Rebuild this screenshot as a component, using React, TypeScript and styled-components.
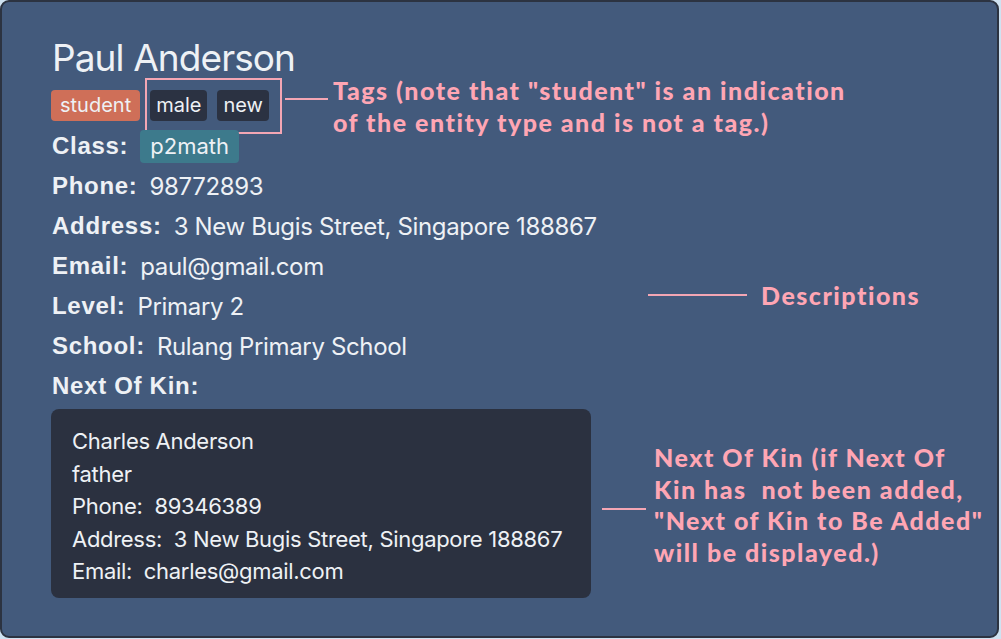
import React from "react";
import styled, { createGlobalStyle } from "styled-components";

const Global = createGlobalStyle`
  html, body { margin: 0; padding: 0; background: #cfe2f1; }
  body { width: 1001px; height: 639px; overflow: hidden; }
`;

const Card = styled.div`
  position: relative;
  box-sizing: border-box;
  width: 999px;
  height: 638px;
  background: #435a7c;
  border: 2px solid #2c3341;
  border-radius: 9px;
  padding: 34px 0 0 49px;
  font-family: Inter, "Liberation Sans", sans-serif;
  color: #eef1f5;
`;

const Name = styled.div`
  font-size: 37px;
  font-weight: 400;
  line-height: 44px;
  letter-spacing: -0.9px;
  padding-left: 1px;
`;

const TagRow = styled.div`
  display: flex;
  align-items: flex-end;
  gap: 7px;
  height: 46px;
  box-sizing: border-box;
  padding-bottom: 5px;
`;

const TagGroup = styled.div`
  display: flex;
  gap: 10px;
  padding: 10px 11px 11px 3px;
  margin: -10px 0 -11px 0;
  outline: 2px solid #f4a6b4;
`;

const Tag = styled.span<{ $bg: string; $pad: number }>`
  display: inline-block;
  background: ${(p) => p.$bg};
  color: #eef1f5;
  font-size: 20px;
  line-height: 31px;
  padding: 0 ${(p) => p.$pad}px;
  border-radius: 4px;
`;

const Row = styled.div`
  display: flex;
  align-items: center;
  height: 40px;
  font-size: 24px;
  padding-left: 1px;
`;

const Label = styled.span`
  font-family: "Liberation Sans", Arial, sans-serif;
  font-weight: 700;
  font-size: 24px;
  letter-spacing: 0.7px;
  margin-right: 12px;
`;

const Value = styled.span`
  font-weight: 400;
  letter-spacing: -0.35px;
`;

const ClassTag = styled.span`
  background: #3d7a8c;
  font-size: 22px;
  line-height: 33px;
  padding: 0 10px;
  border-radius: 4px;
`;

const KinBox = styled.div`
  margin-top: 3px;
  width: 540px;
  height: 189px;
  box-sizing: border-box;
  background: #2b3140;
  border-radius: 8px;
  padding: 16px 0 0 21px;
`;

const KinLine = styled.div`
  font-size: 22px;
  line-height: 32.5px;
  letter-spacing: -0.3px;
`;

const Note = styled.div<{ $x: number; $y: number }>`
  position: absolute;
  left: ${(p) => p.$x}px;
  top: ${(p) => p.$y}px;
  font-family: Lato, "Noto Sans", sans-serif;
  font-weight: 900;
  font-size: 25px;
  line-height: 31.5px;
  letter-spacing: 1.5px;
  color: #ffa6b4;
  white-space: nowrap;
`;

const Leader = styled.div<{ $x: number; $y: number; $w: number }>`
  position: absolute;
  left: ${(p) => p.$x}px;
  top: ${(p) => p.$y}px;
  width: ${(p) => p.$w}px;
  height: 2px;
  background: #f4a6b4;
`;

const fields: [string, string][] = [
  ["Phone:", "98772893"],
  ["Address:", "3 New Bugis Street, Singapore 188867"],
  ["Email:", "paul@gmail.com"],
  ["Level:", "Primary 2"],
  ["School:", "Rulang Primary School"],
];

export default function App() {
  return (
    <>
      <Global />
      <Card>
        <Name>Paul Anderson</Name>
        <TagRow>
          <Tag $bg="#cf6f58" $pad={9}>student</Tag>
          <TagGroup>
            <Tag $bg="#2b3242" $pad={6}>male</Tag>
            <Tag $bg="#2b3242" $pad={6}>new</Tag>
          </TagGroup>
        </TagRow>
        <Row>
          <Label>Class:</Label>
          <ClassTag>p2math</ClassTag>
        </Row>
        {fields.map(([l, v]) => (
          <Row key={l}>
            <Label>{l}</Label>
            <Value>{v}</Value>
          </Row>
        ))}
        <Row>
          <Label>Next Of Kin:</Label>
        </Row>
        <KinBox>
          <KinLine>Charles Anderson</KinLine>
          <KinLine>father</KinLine>
          <KinLine>Phone:&nbsp; 89346389</KinLine>
          <KinLine>Address:&nbsp; 3 New Bugis Street, Singapore 188867</KinLine>
          <KinLine>Email:&nbsp; charles@gmail.com</KinLine>
        </KinBox>

        <Leader $x={283} $y={96} $w={43} />
        <Note $x={331} $y={73}>
          Tags (note that "student" is an indication
          <br />
          of the entity type and is not a tag.)
        </Note>

        <Leader $x={646} $y={292} $w={99} />
        <Note $x={759} $y={278}>Descriptions</Note>

        <Leader $x={600} $y={506} $w={44} />
        <Note $x={652} $y={440}>
          Next Of Kin (if Next Of
          <br />
          Kin has&nbsp; not been added,
          <br />
          "Next of Kin to Be Added"
          <br />
          will be displayed.)
        </Note>
      </Card>
    </>
  );
}
